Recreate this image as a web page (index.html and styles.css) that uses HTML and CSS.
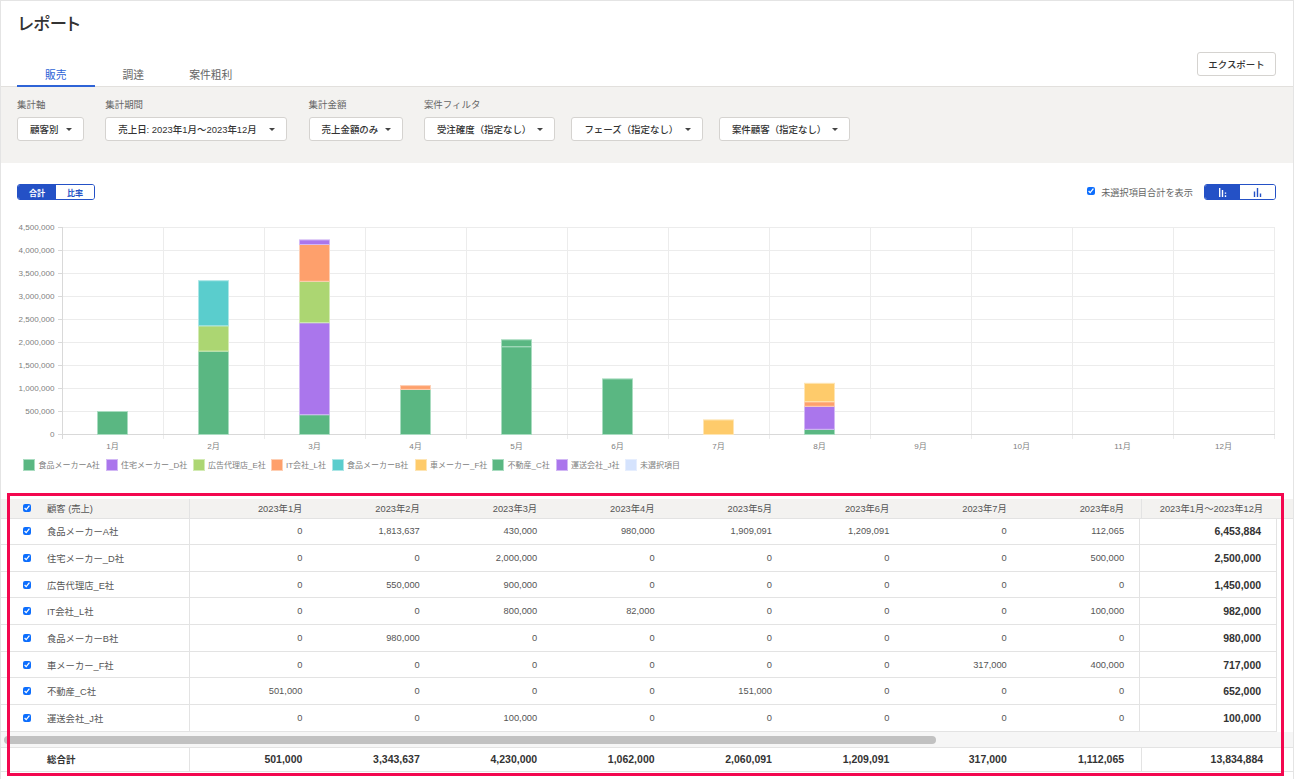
FILE: index.html
```html
<!DOCTYPE html>
<html lang="ja">
	<head>
		<meta charset="UTF-8">
		<title>レポート</title>
		<link rel="stylesheet" href="styles.css">
	</head>
	<body>
		<div class="page">
			<header class="head">
				<h1 class="title">レポート</h1>
				<div class="tab-bar">
					<ul class="tabs">
						<li class="tab active">販売</li>
						<li class="tab">調達</li>
						<li class="tab">案件粗利</li>
					</ul>
					<button class="export">エクスポート</button>
				</div>
			</header>

			<section class="filters">
				<div class="filter">
					<div class="filter-label">集計軸</div>
					<div class="select w-axis"><span>顧客別</span><i class="caret"></i></div>
				</div>
				<div class="filter">
					<div class="filter-label">集計期間</div>
					<div class="select w-period"><span>売上日: 2023年1月〜2023年12月</span><i class="caret"></i></div>
				</div>
				<div class="filter">
					<div class="filter-label">集計金額</div>
					<div class="select w-amount"><span>売上金額のみ</span><i class="caret"></i></div>
				</div>
				<div class="filter">
					<div class="filter-label">案件フィルタ</div>
					<div class="select-row">
						<div class="select w-order"><span>受注確度（指定なし）</span><i class="caret"></i></div>
						<div class="select w-order"><span>フェーズ（指定なし）</span><i class="caret"></i></div>
						<div class="select w-order"><span>案件顧客（指定なし）</span><i class="caret"></i></div>
					</div>
				</div>
			</section>

			<section class="chart-area">
				<div class="chart-tools">
					<div class="segment">
						<div class="seg on">合計</div>
						<div class="seg">比率</div>
					</div>
					<div class="tools-right">
						<label class="show-rest"><input type="checkbox" checked>未選択項目合計を表示</label>
						<div class="segment">
							<div class="seg on">
								<svg class="seg-icon" viewBox="0 0 9 9"><path d="M1 0h1.4v9H1zM3.8 2h1.4v7H3.800zM6.800 4.500h1.400v1.300H6.800zM6.800 7.200h1.400V9H6.800z"/></svg>
							</div>
							<div class="seg">
								<svg class="seg-icon" viewBox="0 0 9 9"><path d="M.8 3.500h1.400V9H.8zM3.800 0h1.400v9H3.800zM6.800 5.500h1.400V9H6.800z"/></svg>
							</div>
						</div>
					</div>
				</div>

				<svg class="chart" width="1292" height="265" viewBox="1 0 1292 265">
					<g class="grid">
						<path d="M62 12.500H1275M62 35.500H1275M62 58.500H1275M62 81.500H1275M62 104.500H1275M62 127.500H1275M62 150.500H1275M62 173.500H1275M62 196.500H1275"/>
						<path d="M163.500 12V224M264.500 12V224M365.500 12V224M466.500 12V224M567.500 12V224M668.500 12V224M769.500 12V224M870.500 12V224M971.500 12V224M1072.500 12V224M1173.500 12V224M1274.500 12V224"/>
					</g>
					<path class="axis" d="M62.500 12V224M58 219.500H1275M58 12.500H62M58 35.500H62M58 58.500H62M58 81.500H62M58 104.500H62M58 127.500H62M58 150.500H62M58 173.500H62M58 196.500H62"/>

					<g class="y-labels">
						<text x="54.500" y="15">4,500,000</text>
						<text x="54.500" y="38">4,000,000</text>
						<text x="54.500" y="61">3,500,000</text>
						<text x="54.500" y="84">3,000,000</text>
						<text x="54.500" y="107">2,500,000</text>
						<text x="54.500" y="130">2,000,000</text>
						<text x="54.500" y="153">1,500,000</text>
						<text x="54.500" y="176">1,000,000</text>
						<text x="54.500" y="199">500,000</text>
						<text x="54.500" y="222">0</text>
					</g>
					<g class="x-labels">
						<text x="112.500" y="234">1月</text>
						<text x="213.500" y="234">2月</text>
						<text x="314.500" y="234">3月</text>
						<text x="415.500" y="234">4月</text>
						<text x="516.500" y="234">5月</text>
						<text x="617.500" y="234">6月</text>
						<text x="718.500" y="234">7月</text>
						<text x="819.500" y="234">8月</text>
						<text x="920.500" y="234">9月</text>
						<text x="1021.500" y="234">10月</text>
						<text x="1122.500" y="234">11月</text>
						<text x="1223.500" y="234">12月</text>
					</g>

					<!-- 1月 -->
					<rect class="green" x="97.500" y="196.500" width="30" height="23"/>
					<!-- 2月 -->
					<rect class="green" x="198.500" y="136.100" width="30" height="83.400"/>
					<rect class="lime" x="198.500" y="110.800" width="30" height="25.300"/>
					<rect class="teal" x="198.500" y="65.700" width="30" height="45.100"/>
					<!-- 3月 -->
					<rect class="green" x="299.500" y="199.700" width="30" height="19.800"/>
					<rect class="purple" x="299.500" y="107.700" width="30" height="92"/>
					<rect class="lime" x="299.500" y="66.300" width="30" height="41.400"/>
					<rect class="orange" x="299.500" y="29.500" width="30" height="36.800"/>
					<rect class="purple" x="299.500" y="24.900" width="30" height="4.600"/>
					<!-- 4月 -->
					<rect class="green" x="400.500" y="174.400" width="30" height="45.100"/>
					<rect class="orange" x="400.500" y="170.600" width="30" height="3.800"/>
					<!-- 5月 -->
					<rect class="green" x="501.500" y="131.700" width="30" height="87.800"/>
					<rect class="green" x="501.500" y="124.800" width="30" height="6.900"/>
					<!-- 6月 -->
					<rect class="green" x="602.500" y="163.900" width="30" height="55.600"/>
					<!-- 7月 -->
					<rect class="yellow" x="703.500" y="204.900" width="30" height="14.600"/>
					<!-- 8月 -->
					<rect class="green" x="804.500" y="214.300" width="30" height="5.200"/>
					<rect class="purple" x="804.500" y="191.300" width="30" height="23"/>
					<rect class="orange" x="804.500" y="186.700" width="30" height="4.600"/>
					<rect class="yellow" x="804.500" y="168.300" width="30" height="18.400"/>

					<!-- legend -->
					<rect class="green" x="23.500" y="244.500" width="11" height="11"/>
					<rect class="purple" x="106.500" y="244.500" width="11" height="11"/>
					<rect class="lime" x="193.500" y="244.500" width="11" height="11"/>
					<rect class="orange" x="271.500" y="244.500" width="11" height="11"/>
					<rect class="teal" x="332.500" y="244.500" width="11" height="11"/>
					<rect class="yellow" x="415.500" y="244.500" width="11" height="11"/>
					<rect class="green" x="492.500" y="244.500" width="11" height="11"/>
					<rect class="purple" x="556.500" y="244.500" width="11" height="11"/>
					<rect class="rest" x="625.500" y="244.500" width="11" height="11"/>
					<g class="legend">
						<text x="38.500" y="253">食品メーカーA社</text>
						<text x="121" y="253">住宅メーカー_D社</text>
						<text x="208" y="253">広告代理店_E社</text>
						<text x="286" y="253">IT会社_L社</text>
						<text x="347" y="253">食品メーカーB社</text>
						<text x="430" y="253">車メーカー_F社</text>
						<text x="507.500" y="253">不動産_C社</text>
						<text x="571" y="253">運送会社_J社</text>
						<text x="640" y="253">未選択項目</text>
					</g>
				</svg>
			</section>

			<section class="report">
				<div class="row head-row">
					<div class="cell check"><input type="checkbox" checked></div>
					<div class="cell name">顧客 (売上)</div>
					<div class="cell">2023年1月</div>
					<div class="cell">2023年2月</div>
					<div class="cell">2023年3月</div>
					<div class="cell">2023年4月</div>
					<div class="cell">2023年5月</div>
					<div class="cell">2023年6月</div>
					<div class="cell">2023年7月</div>
					<div class="cell">2023年8月</div>
					<div class="cell total">2023年1月〜2023年12月</div>
				</div>

				<div class="row">
					<div class="cell check"><input type="checkbox" checked></div>
					<div class="cell name">食品メーカーA社</div>
					<div class="cell">0</div><div class="cell">1,813,637</div><div class="cell">430,000</div><div class="cell">980,000</div>
					<div class="cell">1,909,091</div><div class="cell">1,209,091</div><div class="cell">0</div><div class="cell">112,065</div>
					<div class="cell total">6,453,884</div>
				</div>
				<div class="row">
					<div class="cell check"><input type="checkbox" checked></div>
					<div class="cell name">住宅メーカー_D社</div>
					<div class="cell">0</div><div class="cell">0</div><div class="cell">2,000,000</div><div class="cell">0</div>
					<div class="cell">0</div><div class="cell">0</div><div class="cell">0</div><div class="cell">500,000</div>
					<div class="cell total">2,500,000</div>
				</div>
				<div class="row">
					<div class="cell check"><input type="checkbox" checked></div>
					<div class="cell name">広告代理店_E社</div>
					<div class="cell">0</div><div class="cell">550,000</div><div class="cell">900,000</div><div class="cell">0</div>
					<div class="cell">0</div><div class="cell">0</div><div class="cell">0</div><div class="cell">0</div>
					<div class="cell total">1,450,000</div>
				</div>
				<div class="row">
					<div class="cell check"><input type="checkbox" checked></div>
					<div class="cell name">IT会社_L社</div>
					<div class="cell">0</div><div class="cell">0</div><div class="cell">800,000</div><div class="cell">82,000</div>
					<div class="cell">0</div><div class="cell">0</div><div class="cell">0</div><div class="cell">100,000</div>
					<div class="cell total">982,000</div>
				</div>
				<div class="row">
					<div class="cell check"><input type="checkbox" checked></div>
					<div class="cell name">食品メーカーB社</div>
					<div class="cell">0</div><div class="cell">980,000</div><div class="cell">0</div><div class="cell">0</div>
					<div class="cell">0</div><div class="cell">0</div><div class="cell">0</div><div class="cell">0</div>
					<div class="cell total">980,000</div>
				</div>
				<div class="row">
					<div class="cell check"><input type="checkbox" checked></div>
					<div class="cell name">車メーカー_F社</div>
					<div class="cell">0</div><div class="cell">0</div><div class="cell">0</div><div class="cell">0</div>
					<div class="cell">0</div><div class="cell">0</div><div class="cell">317,000</div><div class="cell">400,000</div>
					<div class="cell total">717,000</div>
				</div>
				<div class="row">
					<div class="cell check"><input type="checkbox" checked></div>
					<div class="cell name">不動産_C社</div>
					<div class="cell">501,000</div><div class="cell">0</div><div class="cell">0</div><div class="cell">0</div>
					<div class="cell">151,000</div><div class="cell">0</div><div class="cell">0</div><div class="cell">0</div>
					<div class="cell total">652,000</div>
				</div>
				<div class="row">
					<div class="cell check"><input type="checkbox" checked></div>
					<div class="cell name">運送会社_J社</div>
					<div class="cell">0</div><div class="cell">0</div><div class="cell">100,000</div><div class="cell">0</div>
					<div class="cell">0</div><div class="cell">0</div><div class="cell">0</div><div class="cell">0</div>
					<div class="cell total">100,000</div>
				</div>

				<div class="scroll-track"><div class="scroll-thumb"></div></div>

				<div class="row foot-row">
					<div class="cell check"></div>
					<div class="cell name">総合計</div>
					<div class="cell">501,000</div><div class="cell">3,343,637</div><div class="cell">4,230,000</div><div class="cell">1,062,000</div>
					<div class="cell">2,060,091</div><div class="cell">1,209,091</div><div class="cell">317,000</div><div class="cell">1,112,065</div>
					<div class="cell total">13,834,884</div>
				</div>

				<div class="highlight"></div>
			</section>
		</div>
	</body>
</html>
```

FILE: styles.css
```css
* {
	margin: 0;
	padding: 0;
	box-sizing: border-box;
}
ul,li {
	list-style: none;
}
html, body {
	height: 100%;
	overflow: hidden;
	background: #fff;
}
body {
	font-family: "Liberation Sans", "Noto Sans CJK JP", sans-serif;
	color: #555;
}
.page {
	width: 1294px;
	height: 779px;
	border-top: 1px solid #e4e4e4;
	border-left: 1px solid #e4e4e4;
	border-right: 1px solid #e4e4e4;
}

/* header */
.head {
	height: 86px;
}
.title {
	font-size: 17.300px;
	font-weight: 500;
	line-height: 24px;
	color: #333;
	padding: 11px 0 0 17px;
	height: 51px;
	font-feature-settings: "palt";
}
.tab-bar {
	display: flex;
	justify-content: space-between;
	height: 35px;
	padding: 0 17px 0 16px;
	border-bottom: 1px solid #e2e0dd;
}
.tabs {
	display: flex;
	height: 35px;
}
.tab {
	width: 77.500px;
	padding-top: 15px;
	text-align: center;
	font-size: 10.800px;
	line-height: 17px;
	color: #666;
}
.tab.active {
	color: #2e63d6;
	border-bottom: 2px solid #2e63d6;
}
.export {
	width: 79px;
	height: 24px;
	background: #fff;
	border: 1px solid #d5d3d0;
	border-radius: 3px;
	font-family: inherit;
	font-size: 9.450px;
	font-weight: 500;
	color: #333;
}

/* filters */
.filters {
	display: flex;
	gap: 21.300px;
	height: 76px;
	padding: 11px 16px 0;
	background: #f3f2f0;
}
.filter-label {
	font-size: 9.450px;
	line-height: 14px;
	margin-bottom: 5px;
	color: #666;
}
.select-row {
	display: flex;
	gap: 16px;
}
.select {
	display: flex;
	align-items: center;
	justify-content: space-between;
	height: 24px;
	padding: 0 11px 0 12px;
	background: #fff;
	border: 1px solid #d5d3d0;
	border-radius: 3px;
	font-size: 9.450px;
	font-weight: 500;
	color: #333;
	white-space: nowrap;
}
.caret {
	border-left: 3px solid transparent;
	border-right: 3px solid transparent;
	border-top: 3px solid #444;
}
.w-axis { width: 67px; }
.w-period { width: 182px; }
.w-amount { width: 94px; }
.w-order { width: 131.500px; }

/* chart */
.chart-area {
	height: 336px;
	padding-top: 21px;
}
.chart-tools {
	display: flex;
	justify-content: space-between;
	align-items: center;
	padding: 0 17px 0 16px;
	margin-bottom: 15px;
}
.tools-right {
	display: flex;
	align-items: center;
	gap: 11px;
}
.show-rest {
	display: flex;
	align-items: center;
	font-size: 9.200px;
	color: #666;
}
.show-rest input {
	width: 8px;
	height: 8px;
	margin: -3px 6px 0 0;
	accent-color: #0d6efd;
}
.segment {
	display: flex;
	width: 78px;
	height: 16px;
	border: 1px solid #2451c6;
	border-radius: 3px;
	overflow: hidden;
}
.tools-right .segment {
	width: 72px;
}
.seg {
	flex: 1;
	display: flex;
	align-items: center;
	justify-content: center;
	font-size: 8.100px;
	font-weight: 700;
	color: #2451c6;
	background: #fff;
}
.seg.on {
	color: #fff;
	background: #2451c6;
}
.seg-icon {
	width: 9px;
	height: 9px;
	fill: currentColor;
}
.chart {
	display: block;
}
.grid path {
	fill: none;
	stroke: #ececec;
}
.axis {
	fill: none;
	stroke: #d9d9d9;
}
.chart text {
	font-size: 8.100px;
	fill: #808080;
}
.chart .legend text {
	font-size: 8px;
}
.y-labels text {
	text-anchor: end;
}
.x-labels text {
	text-anchor: middle;
}
.green { fill: #5ab782; stroke: #a9dcc0; }
.purple { fill: #aa76ec; stroke: #d2b8f5; }
.lime { fill: #acd672; stroke: #d3ebb4; }
.orange { fill: #fea06c; stroke: #fecfb4; }
.teal { fill: #5acdcd; stroke: #ace6e6; }
.yellow { fill: #fecb6b; stroke: #fee5b4; }
.rest { fill: #d5e3fd; stroke: #e6eefe; }

/* table */
.report {
	position: relative;
}
.row {
	display: grid;
	grid-template-columns: 189px repeat(8, 117.400px) 10px 138px;
	width: 1276px;
	height: 26.670px;
	border-bottom: 1px solid #e3e3e3;
	font-size: 9.300px;
}
.cell {
	display: flex;
	align-items: center;
	justify-content: flex-end;
	padding-right: 5px;
	white-space: nowrap;
	overflow: hidden;
}
.row .check {
	position: relative;
	grid-column: 1;
	grid-row: 1;
	justify-content: flex-start;
	padding-left: 22px;
}
.check input {
	width: 8px;
	height: 8px;
	accent-color: #0d6efd;
}
.row .name {
	grid-column: 1;
	grid-row: 1;
	justify-content: flex-start;
	padding-left: 46px;
	border-right: 1px solid #e3e3e3;
}
.row .total {
	grid-column: 11;
	padding-right: 15px;
	border-left: 1px solid #e3e3e3;
	border-right: 1px solid #e3e3e3;
	font-size: 10.500px;
	font-weight: 700;
	color: #333;
}
.head-row {
	grid-template-columns: 189px repeat(8, 117.400px) 12px 151px;
	width: 1292px;
	height: 19.500px;
	background: #f3f2f0;
}
.row.head-row .total {
	padding-right: 29px;
	font-size: 9.300px;
	font-weight: 400;
	color: #555;
	border-right: 0;
}
.scroll-track {
	height: 15px;
	padding: 4px 0 0 3px;
	background: #f6f6f6;
}
.scroll-thumb {
	width: 932px;
	height: 8px;
	border-radius: 4px;
	background: #c1c1c1;
}
.foot-row {
	grid-template-columns: 189px repeat(8, 117.400px) 12px 151px;
	width: 1292px;
	height: 25px;
	border-top: 1px solid #e3e3e3;
	font-size: 10.500px;
	font-weight: 700;
	color: #333;
}
.foot-row .name {
	font-size: 9.450px;
}
.row.foot-row .total {
	padding-right: 29px;
	border-right: 0;
}
.highlight {
	position: absolute;
	top: -6px;
	left: 6px;
	width: 1277px;
	height: 282.500px;
	border: 3px solid #f3074f;
	pointer-events: none;
}
```
